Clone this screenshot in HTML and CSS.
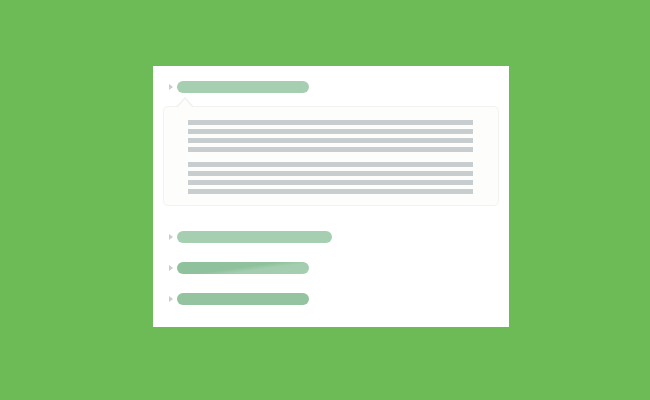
FILE: index.html
```html
<!DOCTYPE html>
<html>
<head>
<meta charset="utf-8">
<link rel="stylesheet" href="styles.css">
</head>
<body>
<div class="stage">
  <div class="card">
    <div class="row">
      <span class="tri"></span>
      <span class="pill pill-light w132"></span>
    </div>
    <div class="panel">
      <div class="para">
        <div class="line"></div>
        <div class="line"></div>
        <div class="line"></div>
        <div class="line"></div>
      </div>
      <div class="para">
        <div class="line"></div>
        <div class="line"></div>
        <div class="line"></div>
        <div class="line"></div>
      </div>
    </div>
    <div class="rows">
      <div class="row">
        <span class="tri"></span>
        <span class="pill pill-light w155"></span>
      </div>
      <div class="row">
        <span class="tri"></span>
        <span class="pill pill-sheen w132"></span>
      </div>
      <div class="row">
        <span class="tri"></span>
        <span class="pill pill-dark w132"></span>
      </div>
    </div>
  </div>
</div>
</body>
</html>
```

FILE: styles.css
```css
html, body {
  margin: 0;
  padding: 0;
}
body {
  background: #6dbb57;
  width: 650px;
  height: 400px;
  font-family: "Liberation Sans", Arial, sans-serif;
}
.stage {
  display: flex;
  padding: 66px 0 0 153px;
}
.card {
  width: 356px;
  height: 261px;
  box-sizing: border-box;
  background: #ffffff;
  padding: 15px 10px 0 10px;
  display: flex;
  flex-direction: column;
}
.row {
  display: flex;
  align-items: center;
  gap: 4px;
  height: 12px;
  padding-left: 6px;
}
.tri {
  width: 0;
  height: 0;
  border-top: 3px solid transparent;
  border-bottom: 3px solid transparent;
  border-left: 4px solid #c9cdcf;
}
.pill {
  height: 12px;
  border-radius: 6px;
  display: block;
}
.w132 { width: 132px; }
.w155 { width: 155px; }
.pill-light { background: #a5cfb0; }
.pill-dark { background: #93c39f; }
.pill-sheen {
  background: linear-gradient(172deg, #8fc29c 0%, #8fc29c 48%, #a3cdae 62%, #a6cfb1 100%);
}
.panel {
  position: relative;
  margin-top: 13px;
  width: 336px;
  height: 100px;
  box-sizing: border-box;
  border: 1px solid #f2f2f0;
  border-radius: 5px;
  background: #fdfdfc;
  padding: 13px 0 0 24px;
  display: flex;
  flex-direction: column;
  gap: 10px;
}
.panel::before {
  content: "";
  position: absolute;
  left: 12px;
  top: -10px;
  width: 0;
  height: 0;
  border-left: 9px solid transparent;
  border-right: 9px solid transparent;
  border-bottom: 10px solid #f0f0ee;
}
.panel::after {
  content: "";
  position: absolute;
  left: 13px;
  top: -8px;
  width: 0;
  height: 0;
  border-left: 8px solid transparent;
  border-right: 8px solid transparent;
  border-bottom: 9px solid #fdfdfc;
}
.para {
  display: flex;
  flex-direction: column;
  gap: 4px;
}
.line {
  width: 285px;
  height: 5px;
  background: #c8cdd0;
}
.rows {
  margin-top: 25px;
  display: flex;
  flex-direction: column;
  gap: 19px;
}
```
